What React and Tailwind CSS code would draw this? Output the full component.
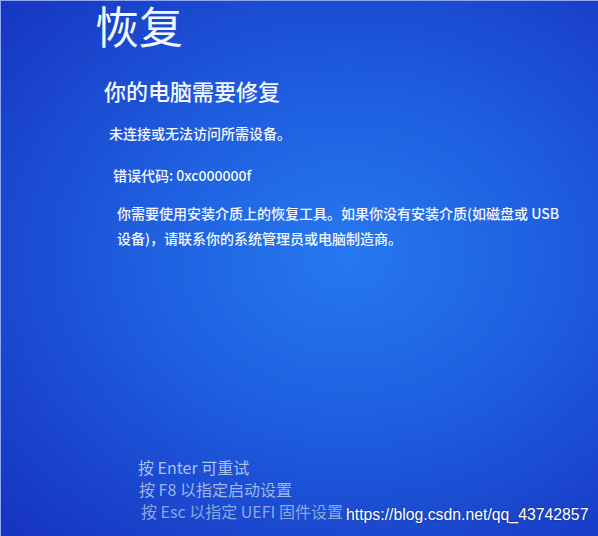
import React from "react";

// Windows 8 recovery screen (photographed), Chinese locale
const cjk = "font-['Noto_Sans_CJK_SC','Noto_Sans',sans-serif]";

const RecoveryScreen = () => {
  return (
    <div
      className={`relative w-[598px] h-[536px] overflow-hidden flex flex-col border-t border-l border-[#8fa6f0] bg-[radial-gradient(ellipse_at_58%_48%,#2678f0_0%,#1f60e0_40%,#1a45cc_75%,#1632c2_100%)] text-[#f3f7ff] ${cjk}`}
    >
      {/* Title */}
      <h1 className="pl-[94px] text-[44px] leading-[48px] font-normal">恢复</h1>

      {/* Subtitle */}
      <h2 className="pl-[103px] mt-[26px] text-[22px] leading-[30px] font-medium">
        你的电脑需要修复
      </h2>

      <p className="pl-[108px] mt-[17px] text-[14px] leading-[22px] font-medium">
        未连接或无法访问所需设备。
      </p>

      <p className="pl-[112px] mt-[20px] text-[14px] leading-[22px] font-medium">
        错误代码: 0xc000000f
      </p>

      <div className="pl-[116px] mt-[15px] text-[14px] leading-[25px] font-medium">
        <p>你需要使用安装介质上的恢复工具。如果你没有安装介质(如磁盘或 USB</p>
        <p>设备)，请联系你的系统管理员或电脑制造商。</p>
      </div>

      {/* Key hints */}
      <div className="mt-auto pb-[14px] text-[16px] leading-[22px]">
        <p className="pl-[137px] text-[#a9c2f0]">按 Enter 可重试</p>
        <p className="pl-[138px] text-[#9db7ec]">按 F8 以指定启动设置</p>
        <p className="pl-[140px] text-[#8aa7e6]">按 Esc 以指定 UEFI 固件设置</p>
      </div>

      {/* Watermark */}
      <span className="absolute left-[345px] top-[503px] text-[15.8px] leading-[22px] text-white font-['Liberation_Sans',Arial,sans-serif] [text-shadow:0_0_2px_rgba(0,0,0,0.45)]">
        https://blog.csdn.net/qq_43742857
      </span>
    </div>
  );
};

export default function App() {
  return <RecoveryScreen />;
}
